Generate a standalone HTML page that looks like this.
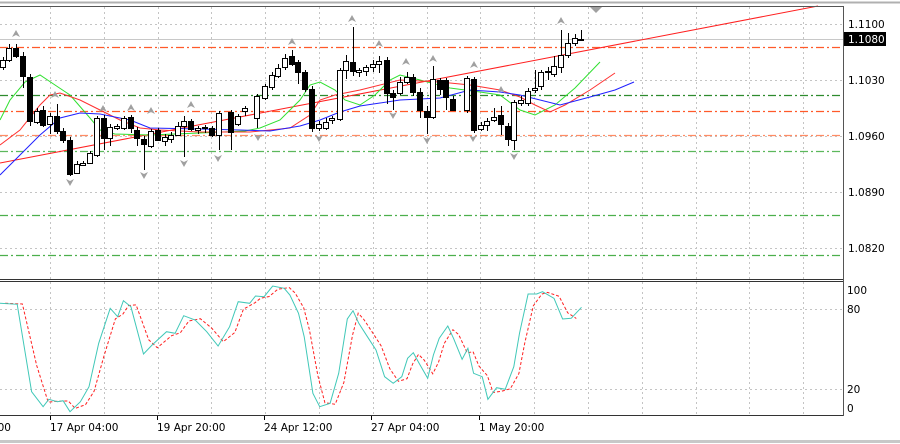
<!DOCTYPE html>
<html><head><meta charset="utf-8"><style>
html,body{margin:0;padding:0;background:#fff;width:900px;height:444px;overflow:hidden}
svg{display:block}
text{font-family:"DejaVu Sans","Liberation Sans",sans-serif;font-size:10.5px;fill:#000}
</style></head><body>
<svg id="s" width="900" height="444" xmlns="http://www.w3.org/2000/svg">
<rect x="0" y="0" width="900" height="444" fill="#fff"/>
<line x1="0" y1="2.5" x2="900" y2="2.5" stroke="#b0b0b0" stroke-width="2"/>
<line x1="0" y1="441.5" x2="900" y2="441.5" stroke="#c8c8c8" stroke-width="3"/>
<g id="grid" stroke="#c4c4c4" stroke-dasharray="2,3" stroke-width="1"></g>
<g id="levels" stroke-width="1.2"></g>
<line x1="0" y1="39.5" x2="843" y2="39.5" stroke="#c8c8c8" stroke-width="1"/>
<g id="ma" fill="none" stroke-width="1"></g>
<g id="candles"></g>
<g id="arrows" fill="#a0a0a0"></g>
<g id="stoch" fill="none"></g>
<line x1="0" y1="6.5" x2="843" y2="6.5" stroke="#555"/>
<line x1="843.5" y1="6" x2="843.5" y2="416" stroke="#555"/>
<line x1="0" y1="279.5" x2="843" y2="279.5" stroke="#333"/>
<line x1="0" y1="281.5" x2="843" y2="281.5" stroke="#333"/>
<line x1="0" y1="415.5" x2="843" y2="415.5" stroke="#333"/>
<g id="labels"></g>
<rect x="844" y="32" width="42" height="14" fill="#000"/>
<text x="848" y="43" style="fill:#fff">1.1080</text>
</svg>
<script>
const NS="http://www.w3.org/2000/svg",$=id=>document.getElementById(id);
function el(p,t,a){const e=document.createElementNS(NS,t);for(const k in a)e.setAttribute(k,a[k]);p.appendChild(e);return e;}
const g=$('grid');
for(let k=0;k<15;k++){const x=Math.round(50+53.8*k)+.5;el(g,'line',{x1:x,y1:7,x2:x,y2:279});el(g,'line',{x1:x,y1:282,x2:x,y2:415});}
[24,80,136,192,248].forEach(y=>el(g,'line',{x1:0,y1:y+.5,x2:843,y2:y+.5}));
[309,389].forEach(y=>el(g,'line',{x1:0,y1:y+.5,x2:843,y2:y+.5}));
const L=$('levels');
[[47,'#ff5a2a'],[111,'#ff5a2a'],[135,'#ff8c64'],[95,'#2e8b2e'],[151,'#5cb85c'],[215,'#4caf4c'],[255,'#4caf4c']].forEach(([y,c])=>el(L,'line',{x1:0,y1:y+.5,x2:843,y2:y+.5,stroke:c,'stroke-dasharray':'8,3,2,3'}));
const M=$('ma');
const pl=(pts,c)=>el(M,'polyline',{points:pts.map(p=>p.join(',')).join(' '),stroke:c});
pl([[0,163],[818,6]],'#ff2020');
pl([[0,120],[10,100],[25,82],[40,75],[55,85],[70,95],[90,118],[100,130],[115,134],[150,135],[200,133],[245,131],[260,128],[280,120],[300,100],[310,85],[320,82],[335,90],[345,100],[360,105],[375,95],[390,80],[400,75],[420,80],[450,88],[480,92],[500,95],[520,110],[535,115],[555,105],[575,88],[600,62]],'#30e030');
pl([[0,145],[20,130],[40,105],[50,95],[60,93],[80,100],[100,110],[120,120],[140,128],[160,130],[200,132],[250,132],[290,128],[310,115],[320,100],[335,95],[360,90],[400,80],[440,82],[470,85],[500,90],[520,97],[535,105],[550,112],[565,105],[590,90],[615,73]],'#ff3030');
pl([[0,175],[20,155],[40,135],[60,118],[80,113],[100,114],[130,120],[150,128],[200,129],[240,130],[270,131],[300,126],[320,120],[340,112],[360,106],[380,103],[400,100],[440,98],[470,90],[500,92],[520,95],[560,105],[590,97],[615,90],[634,82]],'#2020ff');
const C=[[3,60,67,0,57,70],[9,48,60,0,44,62],[16,48,56,1,44,58],[23,56,76,1,52,88],[30,77,121,1,74,126],[37,111,122,0,108,124],[43,110,125,1,106,127],[50,116,124,0,113,134],[57,116,131,1,104,134],[63,131,140,1,128,143],[70,140,174,1,137,176],[77,164,173,0,161,174],[83,163,165,0,161,166],[90,153,163,0,151,164],[97,118,155,0,116,157],[104,118,138,1,115,150],[110,127,138,0,124,146],[117,126,128,0,124,130],[124,118,128,0,116,130],[131,117,128,1,115,133],[137,130,138,1,127,146],[144,139,144,1,136,170],[151,131,146,0,129,148],[158,130,140,1,128,141],[165,137,141,0,134,146],[171,135,139,0,132,143],[178,126,135,0,122,136],[184,121,126,0,116,157],[191,121,129,1,119,131],[198,128,130,0,126,134],[205,127,128,0,125,133],[212,128,135,1,126,137],[219,113,135,0,111,150],[231,112,132,1,110,150],[238,116,124,0,114,126],[245,108,111,0,106,116],[257,96,118,0,94,128],[265,86,98,0,84,100],[272,75,87,0,72,90],[278,68,76,0,64,78],[285,58,67,0,54,70],[292,56,64,1,50,66],[298,62,72,1,60,84],[305,72,89,1,70,92],[312,89,128,1,86,132],[319,124,128,0,121,131],[326,122,128,0,118,130],[332,118,120,0,116,124],[340,70,119,0,68,121],[346,61,70,0,55,79],[353,62,71,1,27,76],[359,70,72,0,68,77],[366,67,71,0,65,76],[373,64,67,0,60,72],[379,61,64,0,56,73],[387,60,93,1,57,104],[393,93,97,1,90,110],[400,82,93,0,77,95],[407,77,82,0,72,84],[413,77,92,1,74,96],[420,92,110,1,88,118],[427,111,117,1,106,134],[433,79,117,0,66,119],[440,80,89,1,78,95],[446,80,97,1,78,110],[453,99,110,1,96,111],[467,78,110,0,76,113],[474,79,130,1,77,133],[481,125,129,0,122,131],[487,121,125,0,118,131],[494,117,120,0,108,122],[501,115,124,1,106,135],[508,126,139,1,123,146],[514,102,140,0,100,150],[521,100,103,0,96,106],[528,91,103,0,88,106],[535,88,90,0,70,93],[541,72,86,0,70,90],[548,71,72,1,67,80],[554,66,74,0,56,77],[561,55,67,0,30,73],[568,43,55,0,33,58],[575,38,43,0,34,46],[581,39,40,0,30,40]];
const K=$('candles');
C.forEach(([x,t,b,bl,wt,wb])=>{el(K,'line',{x1:x+.5,y1:wt,x2:x+.5,y2:wb,stroke:'#000'});el(K,'rect',{x:x-2.5,y:t+.5,width:5,height:Math.max(b-t,1),fill:bl?'#000':'#fff',stroke:'#000','stroke-width':1});});
const A=$('arrows');
const up=(x,y)=>el(A,'path',{d:`M${x} ${y-4}L${x+4} ${y+3}L${x} ${y+1}L${x-4} ${y+3}Z`});
const dn=(x,y)=>el(A,'path',{d:`M${x} ${y+4}L${x+4} ${y-3}L${x} ${y-1}L${x-4} ${y-3}Z`});
[[16,34],[55,95],[103,109],[131,108],[151,111],[191,105],[292,42],[352,19],[379,44],[406,62],[433,59],[474,65],[501,90],[561,21]].forEach(p=>up(...p));
[[70,182],[144,175],[184,163],[218,158],[258,137],[319,138],[393,115],[427,140],[473,138],[514,156]].forEach(p=>dn(...p));
el(A,'path',{d:'M590 7L602 7L596 13Z'});
const S=$('stoch');
const cy=[[0,100],[30,103],[55,365],[75,410],[85,388],[100,395],[110,392],[122,425],[140,395],[155,350],[172,220],[192,115],[205,140],[215,92],[228,110],[250,252],[265,225],[290,185],[305,190],[320,137],[340,150],[360,185],[380,228],[400,170],[415,95],[435,100],[445,78],[460,80],[475,48],[495,55],[505,75],[520,130],[530,200],[545,370],[557,410],[575,400],[590,310],[605,147],[615,122],[625,160],[640,200],[655,240],[670,320],[685,340],[700,320],[710,265],[720,248],[730,280],[745,325],[755,255],[765,205],[780,168],[790,205],[805,268],[815,235],[825,310],[840,320],[850,388],[865,353],[880,358],[895,290],[905,190],[920,72],[935,72],[945,65],[965,85],[980,147],[995,145],[1013,112]];
const tr=p=>[(p[0]/1.742).toFixed(1),(p[1]/3+270).toFixed(1)];
const rd=cy.map((p,i)=>{const q=cy[Math.max(0,i-1)];return [p[0]+9,(p[1]*0.7+q[1]*0.3)];}).filter(p=>p[0]<=1013);
el(S,'polyline',{points:rd.map(p=>tr(p).join(',')).join(' '),stroke:'#ff2020','stroke-dasharray':'3,2'});
el(S,'polyline',{points:cy.map(p=>tr(p).join(',')).join(' '),stroke:'#40c8b8'});
const T=$('labels');
const tx=(x,y,s,a)=>{const e=el(T,'text',{x,y});if(a)e.setAttribute('text-anchor',a);e.textContent=s;};
[[24,'1.1100'],[80,'1.1030'],[136,'1.0960'],[192,'1.0890'],[248,'1.0820']].forEach(([y,s])=>tx(848,y+4,s));
[[290,'100'],[309,'80'],[389,'20'],[408,'0']].forEach(([y,s])=>tx(847,y+4,s));
tx(11,431,'16 Apr 12:00','end');
[[50,'17 Apr 04:00'],[157,'19 Apr 20:00'],[264,'24 Apr 12:00'],[371,'27 Apr 04:00'],[479,'1 May 20:00']].forEach(([x,s])=>{tx(x,431,s);el(T,'line',{x1:x+.5,y1:416,x2:x+.5,y2:420,stroke:'#000'});});
</script>
</body></html>
